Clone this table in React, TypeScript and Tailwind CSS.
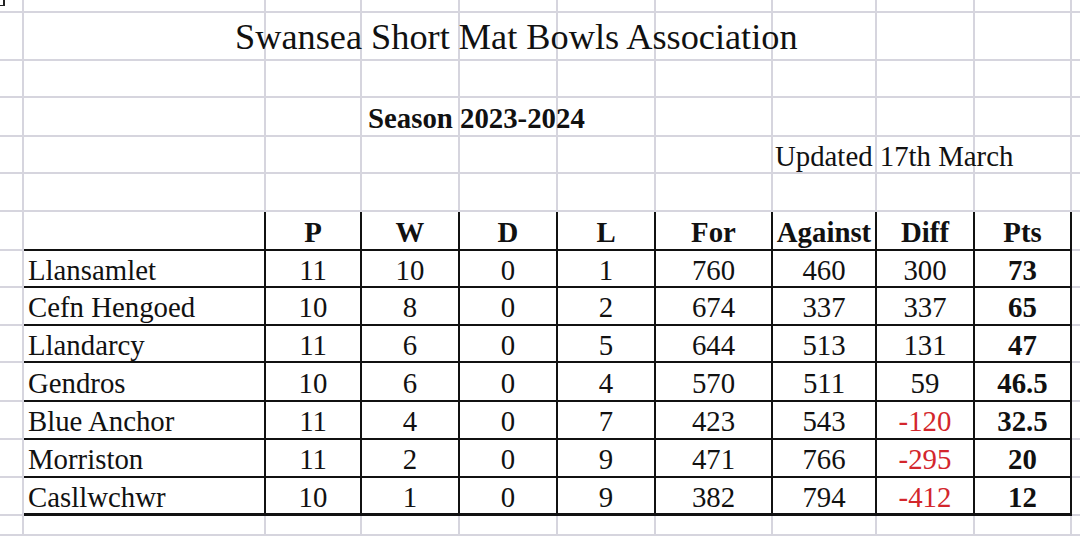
const teams = [
  ["Llansamlet", "11", "10", "0", "1", "760", "460", "300", "73"],
  ["Cefn Hengoed", "10", "8", "0", "2", "674", "337", "337", "65"],
  ["Llandarcy", "11", "6", "0", "5", "644", "513", "131", "47"],
  ["Gendros", "10", "6", "0", "4", "570", "511", "59", "46.5"],
  ["Blue Anchor", "11", "4", "0", "7", "423", "543", "-120", "32.5"],
  ["Morriston", "11", "2", "0", "9", "471", "766", "-295", "20"],
  ["Casllwchwr", "10", "1", "0", "9", "382", "794", "-412", "12"],
];

const headers = ["P", "W", "D", "L", "For", "Against", "Diff", "Pts"];

const ROWS = 15;
const COLS = 11;
const HEADER_ROW = 6;
const FIRST_DATA = 7;
const LAST_DATA = 13;

function inTable(r: number) {
  return r >= HEADER_ROW && r <= LAST_DATA;
}

// border classes for one sheet cell: gray gridlines, black where the table is
function borderFor(r: number, c: number) {
  if (c === COLS - 1) return "border-b-2 border-b-[#d6d5de]";
  const right =
    inTable(r) && c >= 1 && c <= 9
      ? "border-r-2 border-r-[#111]"
      : "border-r-2 border-r-[#d6d5de]";
  let bottom = "border-b-2 border-b-[#d6d5de]";
  if (inTable(r) && c >= 1 && c <= 9) {
    bottom =
      r === LAST_DATA
        ? "border-b-[3px] border-b-[#111]"
        : "border-b-2 border-b-[#111]";
  }
  return `${right} ${bottom}`;
}

function content(r: number, c: number) {
  if (r === 0 && c === 0)
    return <div className="mt-[-3px] h-[6px] w-[5px] self-start border-r-2 border-b border-[#222]" />;
  if (r === 1 && c === 1)
    return (
      <span className="relative z-10 pl-[211px] text-[36.3px] text-[#111]">
        Swansea Short Mat Bowls Association
      </span>
    );
  if (r === 3 && c === 3)
    return <span className="relative z-10 pl-[6px] font-bold">Season 2023-2024</span>;
  if (r === 4 && c === 7)
    return <span className="relative z-10 pl-[2px]">Updated 17th March</span>;
  if (r === HEADER_ROW && c >= 2 && c <= 9)
    return <span className="w-full text-center font-bold">{headers[c - 2]}</span>;
  if (r >= FIRST_DATA && r <= LAST_DATA && c >= 1 && c <= 9) {
    const row = teams[r - FIRST_DATA];
    const v = row[c - 1];
    if (c === 1) return <span className="pl-[4px]">{v}</span>;
    const neg = c === 8 && v.startsWith("-");
    return (
      <span
        className={
          "w-full text-center " +
          (neg ? "text-[#d3262c]" : "") +
          (c === 9 ? " font-bold" : "")
        }
      >
        {v}
      </span>
    );
  }
  return null;
}

export default function App() {
  const cells = [];
  for (let r = 0; r < ROWS; r++) {
    for (let c = 0; c < COLS; c++) {
      cells.push(
        <div
          key={`${r}-${c}`}
          className={`flex items-center whitespace-nowrap pt-[3px] ${borderFor(r, c)}`}
        >
          {content(r, c)}
        </div>
      );
    }
  }

  return (
    <div className="grid h-[536px] w-[1080px] grid-cols-[24px_242px_96px_98px_98px_98px_117px_104px_98px_97px_8px] grid-rows-[13px_48px_37px_39px_37px_38px_39px_37px_38px_37px_39px_38px_38px_38px_20px] overflow-hidden bg-white font-['Liberation_Serif',serif] text-[28.8px] leading-none text-[#111]">
      {cells}
    </div>
  );
}
